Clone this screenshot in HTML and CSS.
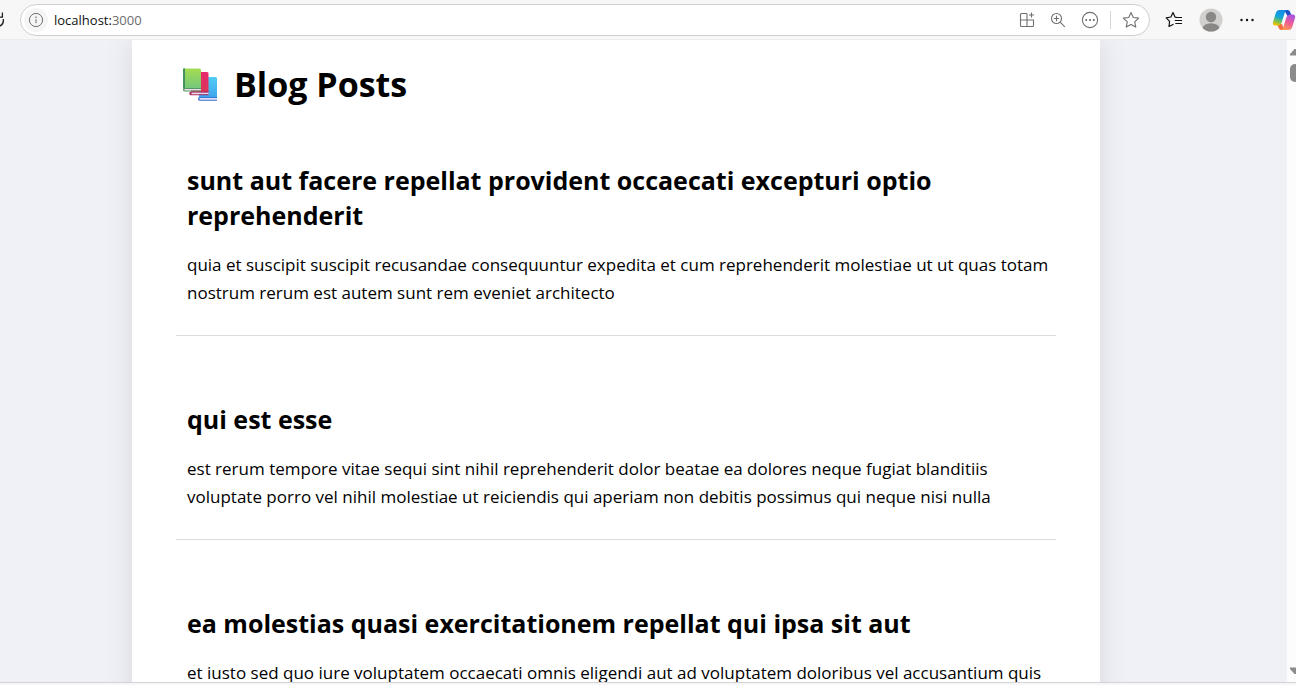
FILE: index.html
```html
<!DOCTYPE html>
<html lang="en">
<head>
<meta charset="utf-8">
<title>Blog Posts</title>
<link rel="stylesheet" href="styles.css">
</head>
<body>
<header class="toolbar">
  <button class="tool reload" aria-label="Reload">
    <svg width="5" height="20" viewBox="0 0 5 20" fill="none" stroke="#222" stroke-width="1.3"><path d="M3.300 9A7 7 0 0 1-1 16.500M-1 7.200H2.400V2.500"/></svg>
  </button>
  <div class="address">
    <button class="tool info" aria-label="Site information">
      <svg width="16" height="16" viewBox="0 0 16 16" fill="none" stroke="#707070"><circle cx="8" cy="8" r="6.6"/><path d="M8 7.2v4"/><circle cx="8" cy="5.2" r=".4"/></svg>
    </button>
    <a class="url" href="#">localhost:<span class="port">3000</span></a>
    <div class="actions">
      <button class="tool" aria-label="Apps">
        <svg width="16" height="16" viewBox="0 0 16 16" fill="none" stroke="#707070" stroke-width="1.1"><path d="M8 1.5H2.5q-1 0-1 1v11q0 1 1 1h11q1 0 1-1V8H1.500M8 1.500v13M12.500 .5v5M10 3h5"/></svg>
      </button>
      <button class="tool" aria-label="Zoom">
        <svg width="16" height="16" viewBox="0 0 16 16" fill="none" stroke="#707070" stroke-width="1.1"><circle cx="6.500" cy="6.500" r="5"/><path d="M10.200 10.200l4.600 4.600M6.500 3.800v5.400M3.800 6.500h5.400"/></svg>
      </button>
      <button class="tool" aria-label="Page actions">
        <svg width="18" height="18" viewBox="0 0 18 18" fill="none" stroke="#707070" stroke-width="1.1"><circle cx="9" cy="9" r="7.600"/><g fill="#606060" stroke="none"><circle cx="5.200" cy="9" r="1"/><circle cx="9" cy="9" r="1"/><circle cx="12.800" cy="9" r="1"/></g></svg>
      </button>
      <span class="divider"></span>
      <button class="tool" aria-label="Add to favorites">
        <svg width="18" height="18" viewBox="0 0 18 18" fill="none" stroke="#707070" stroke-width="1.1" stroke-linejoin="round"><path d="M9 1.500l2.300 5 5.400.6-4 3.700 1.100 5.300L9 13.500l-4.800 2.600 1.100-5.300-4-3.700 5.400-.6z"/></svg>
      </button>
    </div>
  </div>
  <div class="browser-tools">
    <button class="tool" aria-label="Favorites">
      <svg width="18" height="18" viewBox="0 0 18 18" fill="none" stroke="#111" stroke-width="1.200" stroke-linejoin="round"><path d="M12 6.500l-2-.5L8 1.500 5.900 6 1.200 6.800l3.400 3.500L4 15.500l4.500-2.300M10.300 6.500h6.700M9.800 9.500h7.200M10.300 12.500h6.700"/></svg>
    </button>
    <button class="tool" aria-label="Profile">
      <svg width="24" height="24" viewBox="0 0 24 24"><clipPath id="face"><circle cx="12" cy="12" r="11.500"/></clipPath><circle cx="12" cy="12" r="11.500" fill="#d2d0ce"/><g fill="#8a8886" clip-path="url(#face)"><circle cx="12" cy="9" r="5.200"/><ellipse cx="12" cy="20.500" rx="8.500" ry="5.300"/></g></svg>
    </button>
    <button class="tool" aria-label="More">
      <svg width="16" height="16" viewBox="0 0 16 16" fill="#111"><circle cx="2.500" cy="8" r="1.200"/><circle cx="8" cy="8" r="1.200"/><circle cx="13.500" cy="8" r="1.200"/></svg>
    </button>
    <button class="tool copilot" aria-label="Copilot">
      <svg width="24" height="24" viewBox="0 0 24 24">
        <defs>
          <linearGradient id="cool" x1=".6" y1="0" x2=".3" y2="1"><stop offset="0" stop-color="#1688e8"/><stop offset=".45" stop-color="#12a6d8"/><stop offset=".7" stop-color="#68bd63"/><stop offset="1" stop-color="#f5c400"/></linearGradient>
          <linearGradient id="warm" x1=".7" y1="0" x2=".3" y2="1"><stop offset="0" stop-color="#a452e5"/><stop offset=".5" stop-color="#ee5a98"/><stop offset="1" stop-color="#ff9a55"/></linearGradient>
        </defs>
        <path fill="#1b4fc4" d="M12 2h3.500q2 0 2.700 2l1.300 4h-4z"/>
        <path fill="#f36b3e" d="M5 16h5l2 6H9.500q-2.200 0-3-2.500z"/>
        <path fill="url(#cool)" d="M7.500 2H15q-1.500 0-2.200 2.500L9.500 15q-.8 2.500-3.500 2.500H3.500Q.2 17.500 1 14L3.800 5Q4.800 2 7.500 2z"/>
        <path fill="url(#warm)" d="M16.500 22H9q1.500 0 2.200-2.500L14.500 9q.8-2.500 3.500-2.500h2.500q3.300 0 2.500 3.500L20.200 19q-1 3-3.700 3z"/>
      </svg>
    </button>
  </div>
</header>
<div class="viewport">
  <div class="page">
    <main class="blog">
      <h1 class="heading">
        <svg class="books" width="36" height="34" viewBox="0 0 36 34" aria-hidden="true">
          <defs>
            <linearGradient id="green" x2="0" y2="1"><stop stop-color="#a5dc50"/><stop offset="1" stop-color="#74c77d"/></linearGradient>
            <linearGradient id="red" x2="0" y2="1"><stop stop-color="#e9286d"/><stop offset="1" stop-color="#d93756"/></linearGradient>
            <linearGradient id="blue" x2="0" y2="1"><stop stop-color="#51cdf4"/><stop offset="1" stop-color="#3fa4ec"/></linearGradient>
          </defs>
          <path fill="url(#blue)" d="M17 10h16.500q1.500 0 1.500 1.500V31H17z"/><path fill="#dce0f5" d="M17 31h18v1.700H17z"/><path fill="#3869cf" d="M17 30.200h18v.8H17.500v1.700H35v1H17.500Q16 33.700 16 32t1-1.800z"/>
          <path fill="url(#red)" d="M9 5h16q1.500 0 1.500 1.500v19H9z"/><path fill="#e8d8ee" d="M8.500 25.500h18v1.700h-18z"/><path fill="#aa285f" d="M9 24.500h17.500v1H9.500v1.700h17v1.100H9q-1.700 0-1.700-1.900T9 24.500z"/>
          <path fill="url(#green)" d="M1.500 1.500h16Q19 1.500 19 3v18.500H1.500z"/><path fill="#468f61" d="M1 1.500h2v20H1z"/><path fill="#e2e2ee" d="M2 22h17v1.500H2z"/><path fill="#5a9466" d="M2 21h17v1H2.500v1.500H19v.9H2.500Q1 24.400 1 22.700T2 21z"/>
        </svg>
        Blog Posts
      </h1>
      <article class="post">
        <h2 class="title">sunt aut facere repellat provident occaecati excepturi optio reprehenderit</h2>
        <p class="text">quia et suscipit suscipit recusandae consequuntur expedita et cum reprehenderit molestiae ut ut quas totam<br>nostrum rerum est autem sunt rem eveniet architecto</p>
      </article>
      <article class="post">
        <h2 class="title">qui est esse</h2>
        <p class="text">est rerum tempore vitae sequi sint nihil reprehenderit dolor beatae ea dolores neque fugiat blanditiis<br>voluptate porro vel nihil molestiae ut reiciendis qui aperiam non debitis possimus qui neque nisi nulla</p>
      </article>
      <article class="post">
        <h2 class="title">ea molestias quasi exercitationem repellat qui ipsa sit aut</h2>
        <p class="text">et iusto sed quo iure voluptatem occaecati omnis eligendi aut ad voluptatem doloribus vel accusantium quis</p>
      </article>
    </main>
  </div>
  <div class="scrollbar">
    <svg width="6" height="8" viewBox="0 0 6 8" fill="#8b8b8b"><path d="M0 7.500V6L4.500 1H6v6.500z"/></svg>
    <span class="thumb"></span>
    <svg class="down" width="6" height="8" viewBox="0 0 6 8" fill="#8b8b8b"><path d="M0 .5V2l4.500 5H6V.5z"/></svg>
  </div>
</div>
<footer class="edge"></footer>
</body>
</html>
```

FILE: styles.css
```css
* { box-sizing: border-box; }

body {
  margin: 0;
  height: 100vh;
  display: flex;
  flex-direction: column;
  overflow: hidden;
  background: #f7f7f7;
  color: #000;
  font-family: "Segoe UI", "Open Sans", "Noto Sans", sans-serif;
}

.toolbar {
  flex: none;
  height: 40px;
  display: flex;
  align-items: center;
  border-bottom: 1px solid #ebebeb;
}

.tool {
  display: flex;
  align-items: center;
  justify-content: center;
  padding: 0;
  border: 0;
  background: none;
}

.reload { width: 20px; justify-content: flex-start; }

.address {
  flex: 1;
  height: 32px;
  display: flex;
  align-items: center;
  padding: 0 9px 0 3px;
  border: 1px solid #cfcfcf;
  border-radius: 16px;
  background: #fff;
}

.info {
  width: 24px;
  height: 24px;
  border-radius: 12px;
  background: #f5f5f5;
}

.url {
  flex: 1;
  margin-left: 6px;
  font-size: 13px;
  color: #111;
  text-decoration: none;
}

.port { color: #6b6b6b; }

.actions { display: flex; align-items: center; gap: 15px; }

.divider {
  width: 1px;
  height: 18px;
  margin: 0 -4px;
  background: #d5d5d5;
}

.browser-tools {
  flex: none;
  display: flex;
  align-items: center;
  gap: 16px;
  padding-left: 15px;
}

.copilot { padding-left: 1px; }

.viewport {
  flex: 1;
  min-height: 0;
  display: flex;
  overflow: hidden;
}

.page {
  flex: 1;
  padding: 0 187px 0 132px;
  overflow: hidden;
  background: #f0f1f6;
}

.blog {
  min-height: 100%;
  padding: 19px 44px;
  background: #fff;
  box-shadow: 0 0 28px rgba(0, 0, 0, 0.1);
}

.heading {
  display: flex;
  align-items: center;
  gap: 16px;
  margin: 0;
  padding-left: 6px;
  font-size: 34px;
  line-height: 50px;
}

.post {
  padding: 66px 11px 28px;
  border-bottom: 1px solid #dcdcdc;
}

.heading + .post { padding-top: 54px; }

.title {
  margin: 0 0 18px;
  font-size: 25px;
  line-height: 35px;
}

.text {
  margin: 0;
  font-size: 17px;
  line-height: 28px;
  white-space: nowrap;
}

.scrollbar {
  flex: none;
  width: 9px;
  display: flex;
  flex-direction: column;
  align-items: flex-end;
  padding: 8px 0 7px;
  background: #fcfcfc;
}

.thumb {
  width: 6px;
  height: 18px;
  margin-top: 8px;
  border-radius: 5px 0 0 5px;
  background: #8b8b8b;
}

.down { margin-top: auto; }

.edge {
  flex: none;
  height: 3px;
  border-top: 1px solid #d3d4d8;
}
```
